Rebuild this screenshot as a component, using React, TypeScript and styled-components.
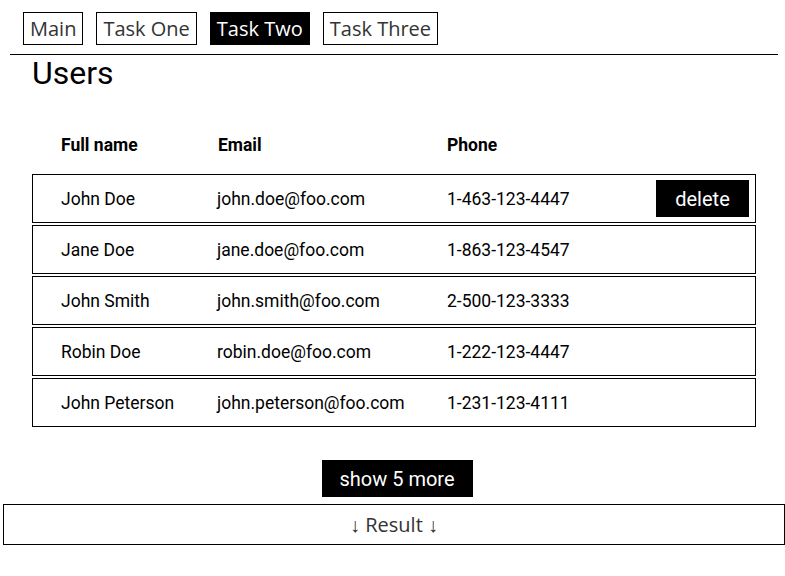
import React, { useState } from "react";
import styled, { createGlobalStyle } from "styled-components";

const GlobalStyle = createGlobalStyle`
  body {
    margin: 0;
    background: #fff;
    font-family: Roboto, "Liberation Sans", sans-serif;
    color: #000;
  }
`;

type User = { name: string; email: string; phone: string };

const users: User[] = [
  { name: "John Doe", email: "john.doe@foo.com", phone: "1-463-123-4447" },
  { name: "Jane Doe", email: "jane.doe@foo.com", phone: "1-863-123-4547" },
  { name: "John Smith", email: "john.smith@foo.com", phone: "2-500-123-3333" },
  { name: "Robin Doe", email: "robin.doe@foo.com", phone: "1-222-123-4447" },
  {
    name: "John Peterson",
    email: "john.peterson@foo.com",
    phone: "1-231-123-4111",
  },
];

const tabs = ["Main", "Task One", "Task Two", "Task Three"];

const App = () => {
  const [active, setActive] = useState("Task Two");

  return (
    <>
      <GlobalStyle />
      <Page>
        <Nav>
          {tabs.map((t) => (
            <NavButton key={t} $active={t === active} onClick={() => setActive(t)}>
              {t}
            </NavButton>
          ))}
        </Nav>
        <Divider />

        <Content>
          <Title>Users</Title>

          <HeaderRow>
            <HeadCell>Full name</HeadCell>
            <HeadCell>Email</HeadCell>
            <HeadCell>Phone</HeadCell>
          </HeaderRow>

          <Rows>
            {users.map((u, i) => (
              <Row key={u.email}>
                <Cell>{u.name}</Cell>
                <Cell>{u.email}</Cell>
                <Cell>{u.phone}</Cell>
                {i === 0 && <DeleteButton>delete</DeleteButton>}
              </Row>
            ))}
          </Rows>

          <MoreWrapper>
            <MoreButton>show 5 more</MoreButton>
          </MoreWrapper>
        </Content>

        <ResultBox>↓ Result ↓</ResultBox>
      </Page>
    </>
  );
};

export default App;

const Page = styled.div`
  width: 785px;
  padding-top: 12px;
`;

const Nav = styled.div`
  display: flex;
  gap: 13px;
  padding-left: 23px;
`;

const NavButton = styled.button<{ $active: boolean }>`
  height: 33px;
  padding: 0 6px;
  box-sizing: border-box;

  font-family: "Open Sans", sans-serif;
  font-size: 20px;
  font-weight: ${(p) => (p.$active ? 500 : 400)};
  line-height: 31px;
  color: ${(p) => (p.$active ? "#fff" : "#333")};
  background: ${(p) => (p.$active ? "#000" : "#fff")};
  border: 1px solid #000;
  border-radius: 0;
  cursor: pointer;
`;

const Divider = styled.div`
  margin: 9px 7px 0 10px;
  border-top: 1px solid #000;
`;

const Content = styled.div`
  padding: 0 29px 0 32px;
`;

const Title = styled.h1`
  margin: 0;
  height: 36px;

  font-size: 32px;
  font-weight: 400;
  line-height: 36px;
`;

const HeaderRow = styled.div`
  display: grid;
  grid-template-columns: 157px 229px 1fr;
  align-items: center;

  height: 46px;
  margin-top: 31px;
  padding-left: 29px;
`;

const HeadCell = styled.div`
  font-size: 17.5px;
  font-weight: 700;
`;

const Rows = styled.div`
  display: flex;
  flex-direction: column;
  gap: 2px;
  margin-top: 6px;
`;

const Row = styled.div`
  display: grid;
  grid-template-columns: 156px 230px 1fr auto;
  align-items: center;

  height: 49px;
  box-sizing: border-box;
  padding: 0 6px 0 28px;

  border: 1px solid #000;
`;

const Cell = styled.div`
  font-size: 17.5px;
  white-space: nowrap;
`;

const DeleteButton = styled.button`
  width: 93px;
  height: 37px;

  font-family: Roboto, sans-serif;
  font-size: 20px;
  color: #fff;
  background: #000;
  border: none;
  border-radius: 0;
`;

const MoreWrapper = styled.div`
  display: flex;
  justify-content: center;
  padding: 33px 0 7px 6px;
`;

const MoreButton = styled.button`
  width: 151px;
  height: 37px;

  font-family: Roboto, sans-serif;
  font-size: 20px;
  color: #fff;
  background: #000;
  border: none;
  border-radius: 0;
`;

const ResultBox = styled.div`
  display: flex;
  align-items: center;
  justify-content: center;

  height: 41px;
  margin: 0 0 0 3px;
  width: 782px;
  box-sizing: border-box;

  font-family: "Open Sans", sans-serif;
  font-size: 20px;
  color: #333;
  border: 1px solid #000;
`;
